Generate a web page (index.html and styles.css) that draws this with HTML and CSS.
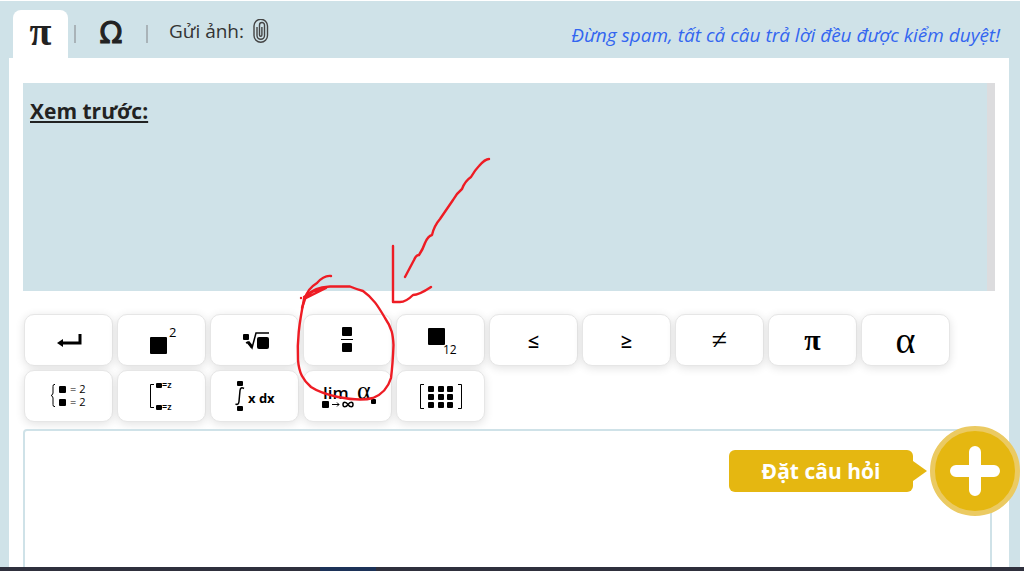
FILE: index.html
```
<!DOCTYPE html>
<html lang="vi">
<head>
    <meta charset="UTF-8">
    <meta name="viewport" content="width=device-width, initial-scale=1.0">
    <title>Trả lời</title>
    <link rel="stylesheet" href="styles.css">
</head>
<body>
    <div class="editor">
        <div class="toolbar">
            <button type="button" class="tab active" aria-label="Công thức">π</button>
            <span class="divider"></span>
            <button type="button" class="tab omega" aria-label="Ký hiệu">Ω</button>
            <span class="divider"></span>
            <button type="button" class="upload">
                Gửi ảnh:
                <svg class="clip" viewBox="0 0 18 24">
                    <path d="M5 8v8.5a3.7 3.7 0 0 0 7.5 0V6a2.5 2.5 0 0 0-5 0v10a1.2 1.2 0 0 0 2.4 0V8M2 7v9.5a6.5 6.5 0 0 0 13.5 0V7M2 7a6 6 0 0 1 13.5 0"/>
                </svg>
            </button>
            <p class="warning">Đừng spam, tất cả câu trả lời đều được kiểm duyệt!</p>
        </div>

        <div class="panel">
            <div class="preview">
                <h2>Xem trước:</h2>
            </div>

            <div class="keyboard">
                <button type="button" class="key" aria-label="Xuống dòng">
                    <svg viewBox="0 0 87 50">
                        <path class="thick" d="M36 28H55V19"/>
                        <path d="M32 28l6-4v8z"/>
                    </svg>
                </button>
                <button type="button" class="key" aria-label="Lũy thừa">
                    <svg viewBox="0 0 87 50">
                        <rect x="32" y="22" width="17" height="17" rx="1"/>
                        <text x="51" y="22" font-size="13">2</text>
                    </svg>
                </button>
                <button type="button" class="key" aria-label="Căn bậc n">
                    <svg viewBox="0 0 87 50">
                        <rect x="32" y="19" width="6" height="6" rx="1"/>
                        <path class="line" d="M35 28l2-1 4 6 4-15h13"/>
                        <path class="thick" d="M37 27l4 5"/>
                        <rect x="46" y="22" width="12" height="12" rx="2"/>
                    </svg>
                </button>
                <button type="button" class="key" aria-label="Phân số">
                    <svg viewBox="0 0 87 50">
                        <rect x="38" y="12" width="10" height="9" rx="1"/>
                        <path class="thin" d="M37 24.5h12"/>
                        <rect x="38" y="28" width="10" height="9" rx="1"/>
                    </svg>
                </button>
                <button type="button" class="key" aria-label="Chỉ số dưới">
                    <svg viewBox="0 0 87 50">
                        <rect x="31" y="13" width="17" height="17" rx="1"/>
                        <text x="46" y="39" font-size="12">12</text>
                    </svg>
                </button>
                <button type="button" class="key symbol">≤</button>
                <button type="button" class="key symbol">≥</button>
                <button type="button" class="key symbol light">≠</button>
                <button type="button" class="key symbol pi">π</button>
                <button type="button" class="key symbol alpha">α</button>
                <button type="button" class="key" aria-label="Hệ phương trình">
                    <svg viewBox="0 0 87 50">
                        <path class="thin" d="M30 13.5h-1q-1 0-1 2V22q0 2-2 2.5 2 .5 2 2.5v6.5q0 2 1 2h1"/>
                        <rect x="34" y="15" width="7" height="7" rx="1"/>
                        <rect x="34" y="28" width="7" height="7" rx="1"/>
                        <text x="45" y="22" font-size="11">= 2</text>
                        <text x="45" y="35" font-size="11">= 2</text>
                    </svg>
                </button>
                <button type="button" class="key" aria-label="Tuyển phương trình">
                    <svg viewBox="0 0 87 50">
                        <path class="thin" d="M36 13.5h-3.5v23H36"/>
                        <rect x="38" y="12" width="6" height="5" rx="1"/>
                        <rect x="38" y="34" width="6" height="5" rx="1"/>
                        <text x="44" y="17" font-size="9" class="semi">=z</text>
                        <text x="44" y="39" font-size="9" class="semi">=z</text>
                    </svg>
                </button>
                <button type="button" class="key" aria-label="Tích phân">
                    <svg viewBox="0 0 87 50">
                        <rect x="26" y="10" width="6" height="5" rx="1"/>
                        <path class="line" d="M33 17.5q-3.5-2-4 2l-1 11q-.5 4-3.5 2.5"/>
                        <rect x="26" y="35" width="6" height="5" rx="1"/>
                        <text x="37" y="32" font-size="13" class="bold">x dx</text>
                    </svg>
                </button>
                <button type="button" class="key" aria-label="Giới hạn">
                    <svg viewBox="0 0 87 50">
                        <text x="19" y="28" font-size="17" class="semi">lim</text>
                        <text x="53" y="28" font-size="26" class="serif">α</text>
                        <rect x="18" y="30" width="7" height="7" rx="1"/>
                        <path class="thin" d="M28 33.5h7M33 31.5l2 2-2 2"/>
                        <path class="line" d="M44 33.5c-2-3-5-3-5 0s3 3 5 0 5-3 5 0-3 3-5 0z"/>
                        <rect x="67" y="28" width="5" height="5" rx="1"/>
                    </svg>
                </button>
                <button type="button" class="key" aria-label="Ma trận">
                    <svg viewBox="0 0 87 50">
                        <path class="thin" d="M27 13.5h-3.5v24H27M61 13.5h3.5v24H61"/>
                        <rect x="31" y="15" width="6" height="6" rx="1"/>
                        <rect x="41" y="15" width="6" height="6" rx="1"/>
                        <rect x="50" y="15" width="6" height="6" rx="1"/>
                        <rect x="31" y="23" width="6" height="6" rx="1"/>
                        <rect x="41" y="23" width="6" height="6" rx="1"/>
                        <rect x="50" y="23" width="6" height="6" rx="1"/>
                        <rect x="31" y="31" width="6" height="6" rx="1"/>
                        <rect x="41" y="31" width="6" height="6" rx="1"/>
                        <rect x="50" y="31" width="6" height="6" rx="1"/>
                    </svg>
                </button>
            </div>

            <textarea class="answer" aria-label="Câu trả lời"></textarea>
        </div>
    </div>

    <div class="taskbar"></div>

    <!-- hand-drawn marks over the fraction key -->
    <svg class="marks" width="500" height="420" viewBox="0 0 500 420">
        <path d="M489 159q-4 0-10 7-4 4-8 11-6 4-9 12-6 5-9 11l-13 19q-6 7-8 16-4 1-7 8-2 6-6 12-3 0-5 5l-9 17"/>
        <path d="M393 246v56h7q6 0 13-7 6 0 18-8"/>
        <path d="M331 276q-7-1-14 7-10 6-12 16l-3 9"/>
        <path d="M305 297C310 291 317 287 330 286.5L350 286.5Q356 289 363 291C373 298 378 306 385 318C392 328 393 335 393.5 345C393 358 392 370 391 378C388 388 383 394 373 398C362 401 348 399 338 397Q320 393 311 387C303 380 299 373 298 360C297 340 299 325 304 299"/>
        <path d="M304 299l8-4 14-7-12 3-10 6M301 298h0"/>
    </svg>

    <div class="ask">
        <span class="ask-label" id="askLabel">Đặt câu hỏi</span>
        <button type="button" class="ask-button" aria-labelledby="askLabel">
            <svg viewBox="0 0 52 52"><path d="M26 7v38M7 26h38"/></svg>
        </button>
    </div>
</body>
</html>
```
FILE: styles.css
```
* {
    box-sizing: border-box;
}
body {
    margin: 0;
    min-height: 100vh;
    display: flex;
    flex-direction: column;
    background: #fff;
    color: #222;
    font-family: "Open Sans", "Noto Sans", sans-serif;
}
button {
    margin: 0;
    padding: 0;
    border: none;
    background: none;
    color: inherit;
    font-family: inherit;
    cursor: pointer;
}
.editor {
    flex: 1;
    display: flex;
    flex-direction: column;
    margin-right: 4px;
    padding: 0 11px 0 9px;
    background: #cfe2e8;
    border-top: 1px solid #fff;
}
.toolbar {
    display: flex;
    align-items: flex-end;
    height: 57px;
    padding: 0 9px 0 4px;
}
.tab {
    width: 55px;
    height: 48px;
    padding-bottom: 4px;
    font-family: "Liberation Serif", serif;
    font-size: 40px;
    font-weight: bold;
    line-height: 40px;
}
.tab.active {
    background: #fff;
    border-radius: 8px 8px 0 0;
}
.tab.omega {
    width: 70px;
    padding-bottom: 2px;
    font-family: "DejaVu Sans", sans-serif;
    font-size: 30px;
    font-weight: normal;
    -webkit-text-stroke: 1px #222;
}
.divider {
    width: 2px;
    height: 18px;
    margin: 0 0 15px 6px;
    background: #a9b3b8;
}
.omega + .divider {
    margin-left: 0;
}
.upload {
    display: flex;
    align-items: center;
    gap: 8px;
    height: 54px;
    margin-left: 21px;
    font-size: 19px;
    color: #333;
}
.clip {
    width: 18px;
    height: 24px;
    fill: none;
    stroke: #444;
    stroke-width: 1.4;
}
.warning {
    margin: 0 0 10px auto;
    color: #3366f0;
    font-size: 19px;
    font-style: italic;
    line-height: 26px;
}
.panel {
    flex: 1;
    display: flex;
    flex-direction: column;
    padding: 25px 14px 0;
    background: #fff;
}
.preview {
    height: 208px;
    padding: 13px 7px;
    background: #cfe2e8;
    border-right: 8px solid #dcdcde;
}
.preview h2 {
    margin: 0;
    font-size: 21px;
    line-height: 30px;
    text-decoration: underline;
}
.keyboard {
    display: flex;
    flex-wrap: wrap;
    gap: 4px;
    padding: 23px 1px 7px;
}
.key {
    width: 89px;
    height: 52px;
    background: #fff;
    border: 1px solid #e6e6e6;
    border-radius: 10px;
    box-shadow: 0 2px 10px rgba(0,0,0,0.12);
    color: #000;
}
.key svg {
    display: block;
    width: 100%;
    height: 50px;
}
.key .thick,
.key .line,
.key .thin {
    fill: none;
    stroke: #000;
}
.key .thick {
    stroke-width: 3;
}
.key .line {
    stroke-width: 1.5;
}
.key .thin {
    stroke-width: 1;
}
.semi {
    font-weight: 600;
}
.bold {
    font-weight: 700;
}
.serif {
    font-family: "Liberation Serif", serif;
}
.symbol {
    font-size: 20px;
    font-weight: 600;
}
.symbol.light {
    font-family: "Liberation Serif", serif;
    font-size: 28px;
    font-weight: normal;
}
.symbol.pi {
    font-family: "Liberation Serif", serif;
    font-size: 30px;
    font-weight: bold;
    line-height: 32px;
}
.symbol.alpha {
    font-family: "Liberation Serif", serif;
    font-size: 38px;
    font-weight: normal;
    line-height: 32px;
}
.answer {
    flex: 1;
    min-height: 137px;
    margin-right: 3px;
    padding: 10px;
    border: 2px solid #cfe2e8;
    border-bottom: none;
    border-radius: 4px 4px 0 0;
    font: 18px "Open Sans", "Noto Sans", sans-serif;
    outline: none;
    resize: none;
}
.taskbar {
    height: 4px;
    background: linear-gradient(90deg, transparent 320px, #1c3258 320px, #1c3258 376px, transparent 376px) #2f303d;
}
.marks {
    position: absolute;
    top: 0;
    left: 0;
    fill: none;
    stroke: #ee1c24;
    stroke-width: 2.4;
    stroke-linecap: round;
    stroke-linejoin: round;
    pointer-events: none;
}
.ask {
    position: fixed;
    right: 4px;
    bottom: 55px;
    display: flex;
    align-items: center;
    gap: 17px;
}
.ask-label {
    position: relative;
    width: 184px;
    background: #e5b711;
    border-radius: 6px;
    color: #fff;
    font-size: 21px;
    font-weight: bold;
    line-height: 42px;
    text-align: center;
}
.ask-label::after {
    content: "";
    position: absolute;
    top: 11px;
    left: 100%;
    border: 10px solid transparent;
    border-left: 14px solid #e5b711;
    border-right: none;
}
.ask-button {
    display: flex;
    align-items: center;
    justify-content: center;
    width: 90px;
    height: 90px;
    background: #e5b711;
    border: 5px solid #ebca62;
    border-radius: 50%;
}
.ask-button svg {
    width: 52px;
    height: 52px;
    stroke: #fff;
    stroke-width: 12;
    stroke-linecap: round;
}
```
